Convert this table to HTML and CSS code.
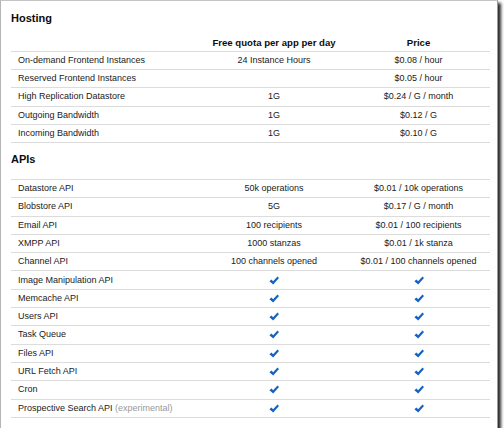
FILE: index.html
```html
<!DOCTYPE html>
<html>
<head>
<meta charset="utf-8">
<link rel="stylesheet" href="styles.css">
</head>
<body>
<div class="frame">
  <h2 class="section-title">Hosting</h2>
  <div class="quota hosting">
    <div class="row head"><div class="c1"></div><div class="c2">Free quota per app per day</div><div class="c3">Price</div></div>
    <div class="row"><div class="c1">On-demand Frontend Instances</div><div class="c2">24 Instance Hours</div><div class="c3">$0.08 / hour</div></div>
    <div class="row"><div class="c1">Reserved Frontend Instances</div><div class="c2"></div><div class="c3">$0.05 / hour</div></div>
    <div class="row"><div class="c1">High Replication Datastore</div><div class="c2">1G</div><div class="c3">$0.24 / G / month</div></div>
    <div class="row"><div class="c1">Outgoing Bandwidth</div><div class="c2">1G</div><div class="c3">$0.12 / G</div></div>
    <div class="row"><div class="c1">Incoming Bandwidth</div><div class="c2">1G</div><div class="c3">$0.10 / G</div></div>
  </div>
  <h2 class="section-title apis-title">APIs</h2>
  <div class="quota apis">
    <div class="row"><div class="c1">Datastore API</div><div class="c2">50k operations</div><div class="c3">$0.01 / 10k operations</div></div>
    <div class="row"><div class="c1">Blobstore API</div><div class="c2">5G</div><div class="c3">$0.17 / G / month</div></div>
    <div class="row"><div class="c1">Email API</div><div class="c2">100 recipients</div><div class="c3">$0.01 / 100 recipients</div></div>
    <div class="row"><div class="c1">XMPP API</div><div class="c2">1000 stanzas</div><div class="c3">$0.01 / 1k stanza</div></div>
    <div class="row"><div class="c1">Channel API</div><div class="c2">100 channels opened</div><div class="c3">$0.01 / 100 channels opened</div></div>
    <div class="row"><div class="c1">Image Manipulation API</div><div class="c2"><svg class="check" viewBox="0 0 10 9"><path d="M0.4 5.3 L2.5 3.5 L4.1 5.2 L8.5 0.4 L10 1.9 L4.2 8.6 Z"/></svg></div><div class="c3"><svg class="check" viewBox="0 0 10 9"><path d="M0.4 5.3 L2.5 3.5 L4.1 5.2 L8.5 0.4 L10 1.9 L4.2 8.6 Z"/></svg></div></div>
    <div class="row"><div class="c1">Memcache API</div><div class="c2"><svg class="check" viewBox="0 0 10 9"><path d="M0.4 5.3 L2.5 3.5 L4.1 5.2 L8.5 0.4 L10 1.9 L4.2 8.6 Z"/></svg></div><div class="c3"><svg class="check" viewBox="0 0 10 9"><path d="M0.4 5.3 L2.5 3.5 L4.1 5.2 L8.5 0.4 L10 1.9 L4.2 8.6 Z"/></svg></div></div>
    <div class="row"><div class="c1">Users API</div><div class="c2"><svg class="check" viewBox="0 0 10 9"><path d="M0.4 5.3 L2.5 3.5 L4.1 5.2 L8.5 0.4 L10 1.9 L4.2 8.6 Z"/></svg></div><div class="c3"><svg class="check" viewBox="0 0 10 9"><path d="M0.4 5.3 L2.5 3.5 L4.1 5.2 L8.5 0.4 L10 1.9 L4.2 8.6 Z"/></svg></div></div>
    <div class="row"><div class="c1">Task Queue</div><div class="c2"><svg class="check" viewBox="0 0 10 9"><path d="M0.4 5.3 L2.5 3.5 L4.1 5.2 L8.5 0.4 L10 1.9 L4.2 8.6 Z"/></svg></div><div class="c3"><svg class="check" viewBox="0 0 10 9"><path d="M0.4 5.3 L2.5 3.5 L4.1 5.2 L8.5 0.4 L10 1.9 L4.2 8.6 Z"/></svg></div></div>
    <div class="row"><div class="c1">Files API</div><div class="c2"><svg class="check" viewBox="0 0 10 9"><path d="M0.4 5.3 L2.5 3.5 L4.1 5.2 L8.5 0.4 L10 1.9 L4.2 8.6 Z"/></svg></div><div class="c3"><svg class="check" viewBox="0 0 10 9"><path d="M0.4 5.3 L2.5 3.5 L4.1 5.2 L8.5 0.4 L10 1.9 L4.2 8.6 Z"/></svg></div></div>
    <div class="row"><div class="c1">URL Fetch API</div><div class="c2"><svg class="check" viewBox="0 0 10 9"><path d="M0.4 5.3 L2.5 3.5 L4.1 5.2 L8.5 0.4 L10 1.9 L4.2 8.6 Z"/></svg></div><div class="c3"><svg class="check" viewBox="0 0 10 9"><path d="M0.4 5.3 L2.5 3.5 L4.1 5.2 L8.5 0.4 L10 1.9 L4.2 8.6 Z"/></svg></div></div>
    <div class="row"><div class="c1">Cron</div><div class="c2"><svg class="check" viewBox="0 0 10 9"><path d="M0.4 5.3 L2.5 3.5 L4.1 5.2 L8.5 0.4 L10 1.9 L4.2 8.6 Z"/></svg></div><div class="c3"><svg class="check" viewBox="0 0 10 9"><path d="M0.4 5.3 L2.5 3.5 L4.1 5.2 L8.5 0.4 L10 1.9 L4.2 8.6 Z"/></svg></div></div>
    <div class="row"><div class="c1">Prospective Search API <span class="note">(experimental)</span></div><div class="c2"><svg class="check" viewBox="0 0 10 9"><path d="M0.4 5.3 L2.5 3.5 L4.1 5.2 L8.5 0.4 L10 1.9 L4.2 8.6 Z"/></svg></div><div class="c3"><svg class="check" viewBox="0 0 10 9"><path d="M0.4 5.3 L2.5 3.5 L4.1 5.2 L8.5 0.4 L10 1.9 L4.2 8.6 Z"/></svg></div></div>
  </div>
</div>
</body>
</html>
```

FILE: styles.css
```css
html, body {
  margin: 0;
  padding: 0;
  background: #fff;
}

body {
  font-family: "Liberation Sans", Arial, sans-serif;
  color: #1a1a1a;
}

.frame {
  width: 498px;
  height: 428px;
  box-sizing: border-box;
  border-top: 1px solid #c4c4c4;
  border-left: 1px solid #b5b5b5;
  border-right: 1px solid #9a9a9a;
  box-shadow: 3px 3px 3px #2a2a2a;
  padding: 11px 0 0 10px;
  background: #fff;
}

.section-title {
  margin: 0;
  font-size: 11px;
  line-height: 13px;
  font-weight: bold;
  color: #0d0d0d;
}

.apis-title {
  margin-top: 10.5px;
}

.quota {
  width: 479px;
  margin-top: 8px;
}

.apis {
  margin-top: 12.5px;
  border-top: 1px solid #dcdcdc;
}

.row {
  display: grid;
  grid-template-columns: 190px 146px 143px;
  align-items: center;
  height: 18.2px;
  box-sizing: border-box;
  border-bottom: 1px solid #dcdcdc;
  font-size: 9px;
  line-height: 11px;
}

.apis .row {
  height: 18.3px;
}

.row.head {
  height: 19px;
  font-weight: bold;
  font-size: 9.6px;
  color: #0d0d0d;
}

.c1 {
  padding-left: 7px;
}

.c2, .c3 {
  text-align: center;
}

.note {
  color: #999;
}

.check {
  display: block;
  width: 10px;
  height: 9px;
  margin: 0 auto;
  fill: #1462c4;
}
```
